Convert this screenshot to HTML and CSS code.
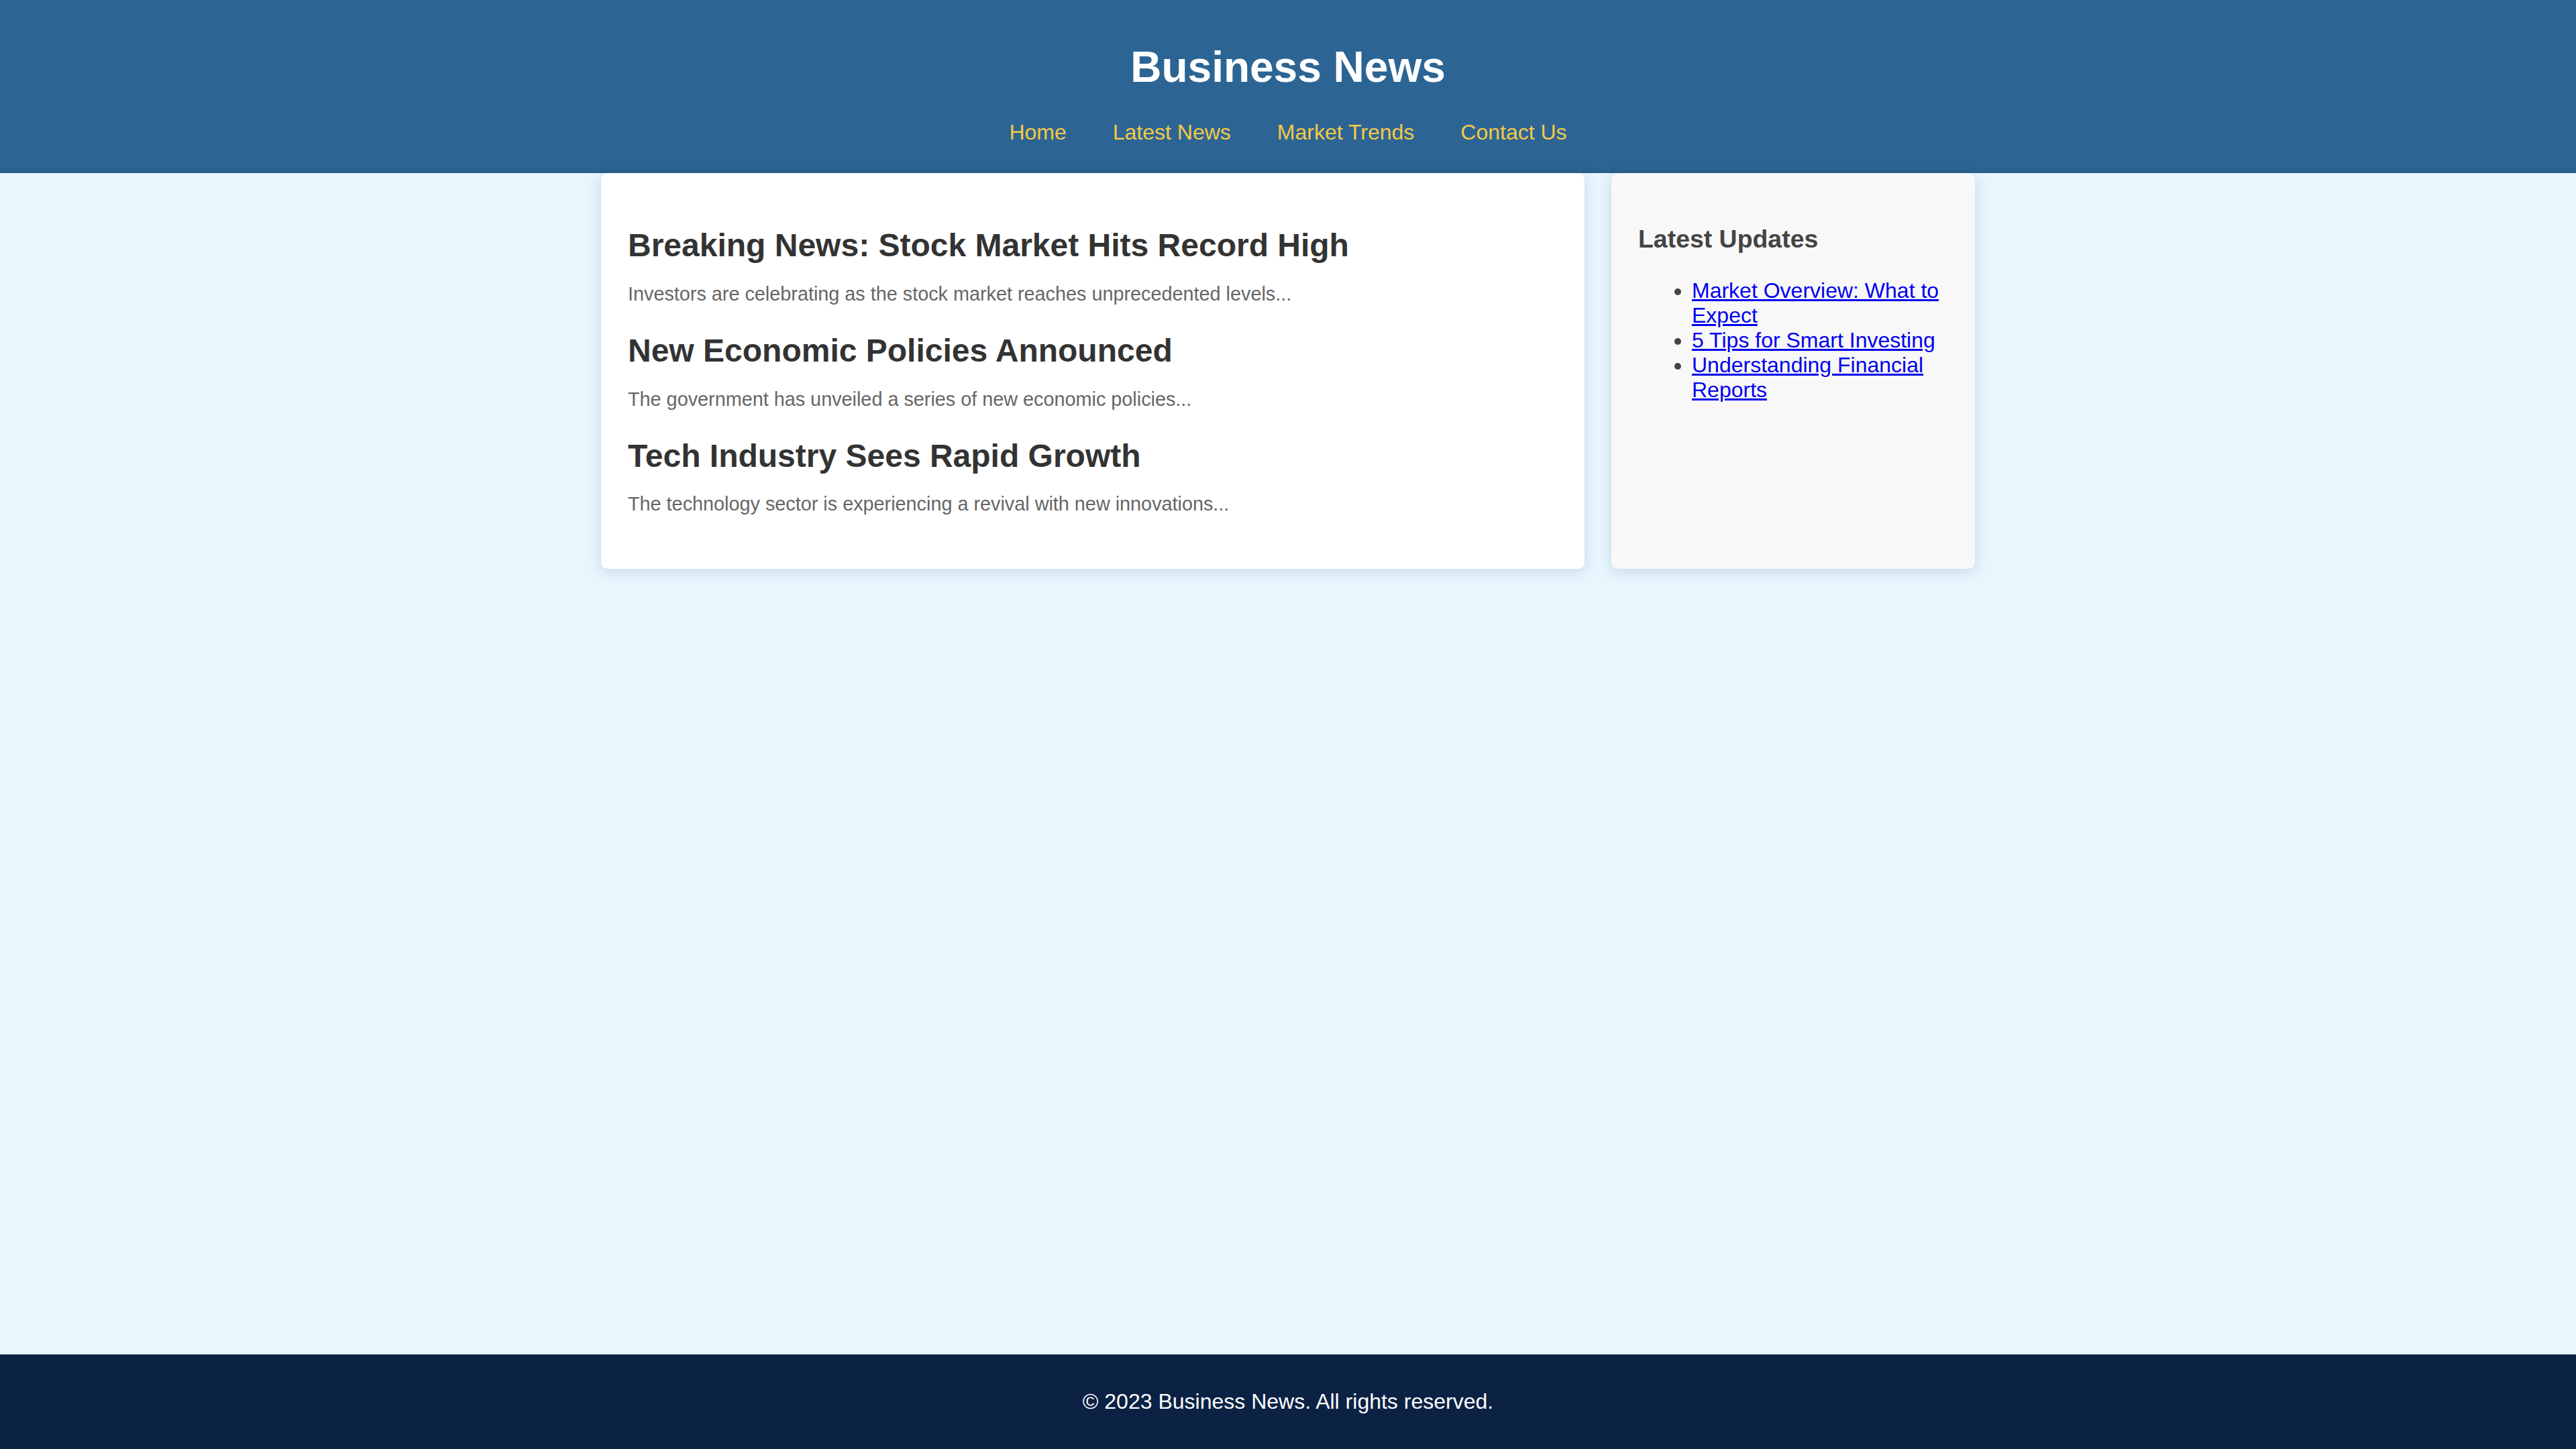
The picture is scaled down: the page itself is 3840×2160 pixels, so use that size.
FILE: index.html
```html
<!DOCTYPE html>
<html lang="en">
<head>
<meta charset="utf-8">
<title>Business News</title>
<link rel="stylesheet" href="styles.css">
</head>
<body>
<header class="site-header">
  <h1 class="site-title">Business News</h1>
  <nav class="site-nav">
    <a href="#">Home</a>
    <a href="#">Latest News</a>
    <a href="#">Market Trends</a>
    <a href="#">Contact Us</a>
  </nav>
</header>
<div class="main-wrap">
  <div class="page">
    <main class="content">
      <article class="article">
        <h2>Breaking News: Stock Market Hits Record High</h2>
        <p>Investors are celebrating as the stock market reaches unprecedented levels...</p>
      </article>
      <article class="article">
        <h2>New Economic Policies Announced</h2>
        <p>The government has unveiled a series of new economic policies...</p>
      </article>
      <article class="article">
        <h2>Tech Industry Sees Rapid Growth</h2>
        <p>The technology sector is experiencing a revival with new innovations...</p>
      </article>
    </main>
    <aside class="sidebar">
      <h3>Latest Updates</h3>
      <ul>
        <li><a href="#">Market Overview: What to Expect</a></li>
        <li><a href="#">5 Tips for Smart Investing</a></li>
        <li><a href="#">Understanding Financial Reports</a></li>
      </ul>
    </aside>
  </div>
</div>
<footer class="site-footer">
  <p>&copy; 2023 Business News. All rights reserved.</p>
</footer>
</body>
</html>
```

FILE: styles.css
```css
html, body {
  margin: 0;
  padding: 0;
}
body {
  font-family: "Liberation Sans", Arial, sans-serif;
  font-size: 32px;
  background: #e8f6fd;
  color: #333;
  min-height: 100vh;
  display: flex;
  flex-direction: column;
}
.site-header {
  background: linear-gradient(to bottom, #2c6594 0, #2c6594 calc(100% - 8px), #285c88 100%);
  text-align: center;
  padding: 20px 0 42px;
}
.site-title {
  color: #ffffff;
  font-size: 64px;
  margin: 43px 0 42px;
  line-height: normal;
}
.site-nav {
  display: flex;
  justify-content: center;
  gap: 69px;
}
.site-nav a {
  color: #f6c945;
  text-decoration: none;
}
.main-wrap {
  flex: 1;
}
.page {
  width: 2048px;
  margin: 0 auto;
  display: flex;
  align-items: stretch;
  gap: 40px;
}
.content {
  flex: 3 1 0;
  background: #ffffff;
  padding: 40px;
  border-radius: 10px;
  box-shadow: 0 4px 20px rgba(40, 90, 130, 0.18);
}
.sidebar {
  flex: 1 1 0;
  background: #f8f8f8;
  padding: 40px;
  border-radius: 10px;
  box-shadow: 0 4px 20px rgba(40, 90, 130, 0.18);
}
.article {
  margin-bottom: 40px;
}
.article h2 {
  font-size: 48px;
  color: #333;
  margin: 40px 0 20px;
}
.article p {
  font-size: 28.8px;
  color: #666;
  margin: 28.8px 0;
}
.sidebar h3 {
  font-size: 37.44px;
  color: #444;
  margin: 37px 0;
}
.sidebar ul {
  margin: 32px 0;
  padding-left: 80px;
  color: #444;
}
.sidebar a {
  color: #0000ee;
}
.site-footer {
  background: #0b2244;
  color: #ffffff;
  text-align: center;
  padding: 20px 0;
}
.site-footer p {
  margin: 32px 0;
}
```
